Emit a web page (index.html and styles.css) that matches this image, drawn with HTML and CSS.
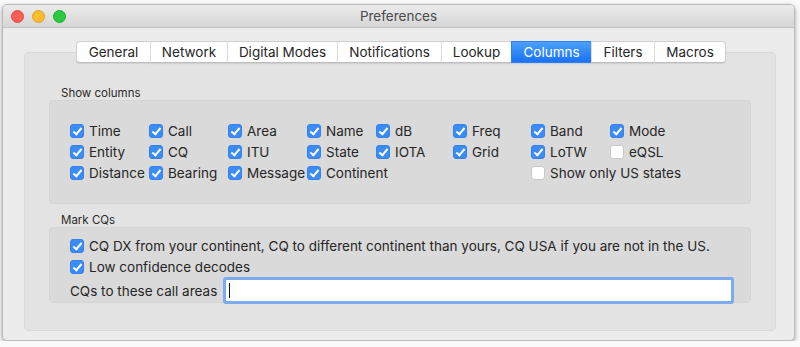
FILE: index.html
```html
<!DOCTYPE html>
<html lang="en">
<head>
    <meta charset="UTF-8">
    <meta name="viewport" content="width=device-width, initial-scale=1.0">
    <title>Preferences</title>
    <link rel="stylesheet" href="styles.css">
</head>
<body>
    <div class="window">
        <div class="titlebar">
            <div class="lights">
                <span class="light red"></span>
                <span class="light yellow"></span>
                <span class="light green"></span>
            </div>
            <div class="title">Preferences</div>
        </div>

        <div class="content">
            <div class="tabs">
                <div class="tab t-general">General</div>
                <div class="tab t-network">Network</div>
                <div class="tab t-digital">Digital Modes</div>
                <div class="tab t-notif">Notifications</div>
                <div class="tab t-lookup">Lookup</div>
                <div class="tab t-columns active">Columns</div>
                <div class="tab t-filters">Filters</div>
                <div class="tab t-macros">Macros</div>
            </div>

            <div class="panel">
                <div class="group-label">Show columns</div>
                <div class="group">
                    <div class="columns-grid">
                        <label class="check"><span class="box on"></span>Time</label>
                        <label class="check"><span class="box on"></span>Call</label>
                        <label class="check"><span class="box on"></span>Area</label>
                        <label class="check"><span class="box on"></span>Name</label>
                        <label class="check"><span class="box on"></span>dB</label>
                        <label class="check"><span class="box on"></span>Freq</label>
                        <label class="check"><span class="box on"></span>Band</label>
                        <label class="check"><span class="box on"></span>Mode</label>

                        <label class="check"><span class="box on"></span>Entity</label>
                        <label class="check"><span class="box on"></span>CQ</label>
                        <label class="check"><span class="box on"></span>ITU</label>
                        <label class="check"><span class="box on"></span>State</label>
                        <label class="check"><span class="box on"></span>IOTA</label>
                        <label class="check"><span class="box on"></span>Grid</label>
                        <label class="check"><span class="box on"></span>LoTW</label>
                        <label class="check"><span class="box"></span>eQSL</label>

                        <label class="check"><span class="box on"></span>Distance</label>
                        <label class="check"><span class="box on"></span>Bearing</label>
                        <label class="check"><span class="box on"></span>Message</label>
                        <label class="check"><span class="box on"></span>Continent</label>
                        <label class="check us-only"><span class="box"></span>Show only US states</label>
                    </div>
                </div>

                <div class="group-label second">Mark CQs</div>
                <div class="group cq-group">
                    <label class="check"><span class="box on"></span>CQ DX from your continent, CQ to different continent than yours, CQ USA if you are not in the US.</label>
                    <label class="check"><span class="box on"></span>Low confidence decodes</label>
                    <div class="field-row">
                        <span class="field-label">CQs to these call areas</span>
                        <div class="field"><span class="caret"></span></div>
                    </div>
                </div>
            </div>
        </div>
    </div>
</body>
</html>
```

FILE: styles.css
```css
* {
    box-sizing: border-box;
    margin: 0;
    padding: 0;
}
body {
    font-family: Inter, "Noto Sans", sans-serif;
    font-size: 13.5px;
    color: #262626;
    background-color: #fafafa;
    overflow: hidden;
}
.window {
    margin: 4px 5px 0 2px;
    height: 337px;
    border: 1px solid #b9b9b9;
    border-radius: 5px;
    background-color: #ececec;
    box-shadow: 0 2px 5px rgba(0, 0, 0, 0.35);
    overflow: hidden;
}
.titlebar {
    height: 23px;
    display: flex;
    align-items: center;
    background: linear-gradient(#ebebeb, #d6d6d6);
    border-bottom: 1px solid #c4c4c4;
}
.lights {
    display: flex;
    gap: 8px;
    padding-left: 8px;
    width: 120px;
}
.light {
    width: 13px;
    height: 13px;
    border-radius: 50%;
}
.red { background-color: #fc5f57; border: 1px solid #e14942; }
.yellow { background-color: #fdbc2e; border: 1px solid #dfa023; }
.green { background-color: #29c940; border: 1px solid #1dad2b; }
.title {
    flex: 1;
    text-align: center;
    padding-right: 120px;
    color: #4a4a4a;
}
.content {
    padding: 13px 18px 0 21px;
}
.tabs {
    position: relative;
    z-index: 1;
    display: flex;
    justify-content: center;
    margin-bottom: -11px;
    padding-left: 2px;
}
.tab {
    height: 22px;
    line-height: 21px;
    text-align: center;
    background-color: #fff;
    border-top: 1px solid #cfcfcf;
    border-bottom: 1px solid #bdbdbd;
    border-left: 1px solid #dcdcdc;
    box-shadow: 0 1px 1px rgba(0, 0, 0, 0.08);
}
.tab:first-child {
    border-left: 1px solid #cfcfcf;
    border-radius: 4px 0 0 4px;
}
.tab:last-child {
    border-right: 1px solid #cfcfcf;
    border-radius: 0 4px 4px 0;
}
.tab.active {
    color: #fff;
    background: linear-gradient(#4ba1fc, #1a72f8);
    border-color: #2d7ff7;
}
.t-general { width: 74px; }
.t-network { width: 77px; }
.t-digital { width: 110px; }
.t-notif { width: 104px; }
.t-lookup { width: 70px; }
.t-columns { width: 80px; }
.t-filters { width: 63px; }
.t-macros { width: 72px; }
.panel {
    height: 279px;
    padding: 33px 24px 0 24px;
    background-color: #e3e3e3;
    border: 1px solid #dadada;
    border-radius: 4px;
}
.group-label {
    font-size: 11.5px;
    line-height: 14px;
    padding-left: 12px;
    color: #2a2a2a;
}
.group-label.second {
    margin-top: 9px;
}
.group {
    background-color: #dadada;
    border-radius: 4px;
    border: 1px solid #d5d5d5;
    padding: 19px 0 20px 20px;
}
.columns-grid {
    display: grid;
    grid-template-columns: 79px 79px 79px 69px 77px 78px 79px auto;
    grid-auto-rows: 21px;
}
.us-only {
    grid-column: 7 / span 2;
}
.check {
    display: flex;
    align-items: center;
    gap: 5px;
    height: 21px;
    white-space: nowrap;
}
.box {
    position: relative;
    flex: 0 0 auto;
    width: 14px;
    height: 14px;
    border-radius: 3px;
    background-color: #fff;
    border: 1px solid #c9c9c9;
}
.box.on {
    background-color: #3b8cf6;
    border-color: #3382f0;
}
.box.on::after {
    content: "";
    position: absolute;
    left: 4px;
    top: 1px;
    width: 3px;
    height: 7px;
    border: solid #fff;
    border-width: 0 2px 2px 0;
    transform: rotate(40deg);
}
.cq-group {
    padding: 7px 16px 0 20px;
}
.field-row {
    display: flex;
    align-items: center;
    gap: 6px;
    height: 27px;
    margin-bottom: -2px;
}
.field {
    flex: 1;
    height: 27px;
    background-color: #fff;
    border: 3px solid #7eaaf0;
    border-radius: 3px;
    display: flex;
    align-items: center;
    padding-left: 3px;
}
.caret {
    width: 1px;
    height: 15px;
    background-color: #111;
}
```
